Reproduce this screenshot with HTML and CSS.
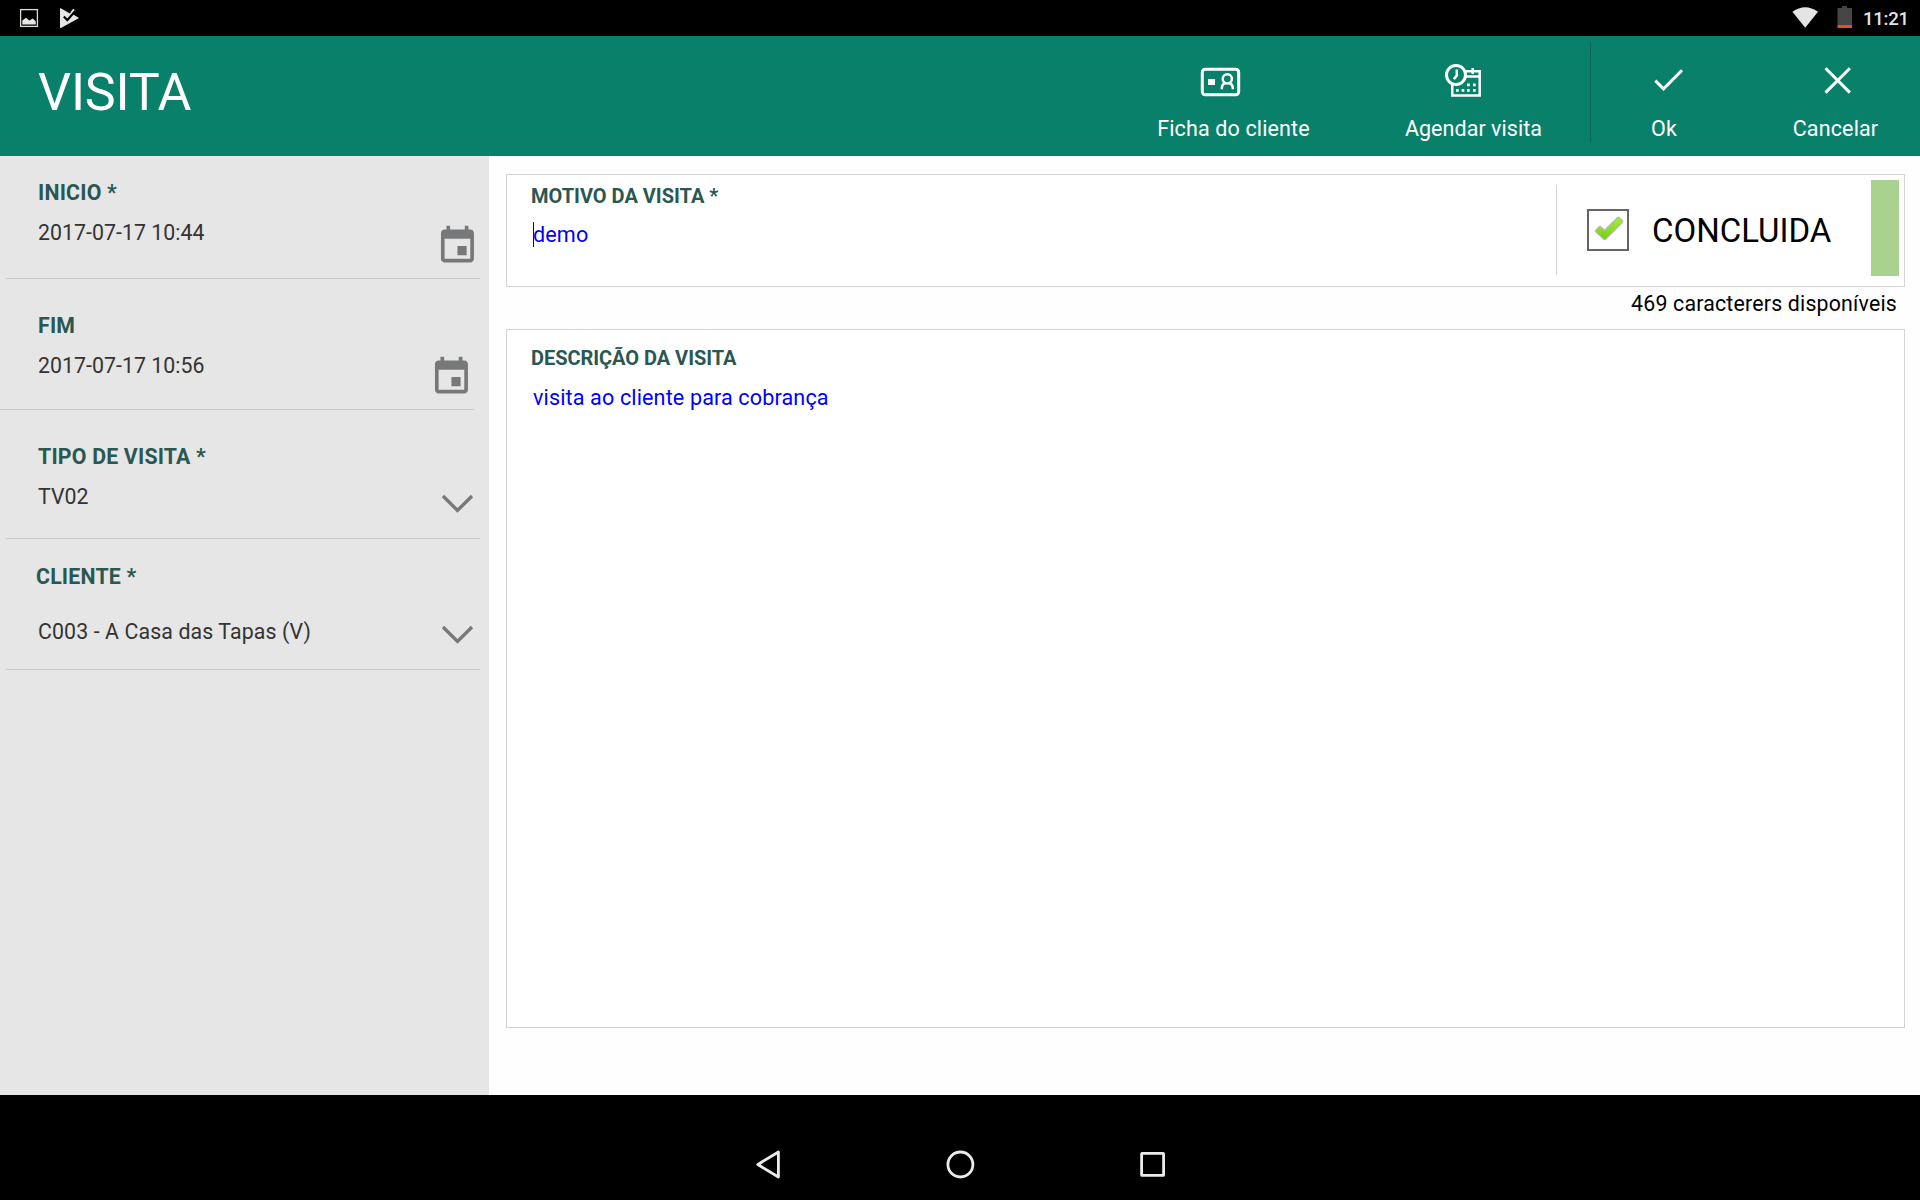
FILE: index.html
```html
<!DOCTYPE html>
<html lang="pt">
<head>
<meta charset="utf-8">
<title>Visita</title>
<link rel="stylesheet" href="styles.css">
</head>
<body>
<div class="status">
  <svg class="status-left" width="64" height="36" viewBox="0 0 64 36">
    <rect x="0.6" y="9.6" width="16.8" height="16.8" fill="none" stroke="#deded9" stroke-width="1.3"/>
    <path d="M2.3 24.5V20.6l3.8-2.9 3.2 2.9 3.5-2 2.9 2.6v3.3z" fill="#e6e6e6"/>
    <path d="M40 8.6q0-.7.7-.3l8.8 4.9 3.7-4.4 2.5 1.9-3 3.6 5.6 3.1q.8.5 0 1l-17 9.4q-1.3.6-1.3-.6z" fill="#e6e6e6"/>
    <path d="M43.8 16.6l3.5 3.5L55.400 10.700" fill="none" stroke="#000" stroke-width="2.1"/>
    <path d="M49.500 13.200l1-1.200" stroke="#000" stroke-width="1"/>
  </svg>
  <div class="status-right">
    <svg width="60" height="36" viewBox="0 0 60 36">
      <path d="M.4 11.800Q13.200 2.600 26 11.800L13.200 27.700z" fill="#e4e4e4"/>
      <path d="M45.500 8h4.500V6h5v2h5v17H45.500z" fill="#454545"/>
      <path d="M45.500 25H60v3H45.500z" fill="#e2521f"/>
    </svg>
    <span class="clock">11:21</span>
  </div>
</div>

<header class="header">
  <h1 class="title">VISITA</h1>
  <nav class="actions">
    <div class="action action-card">
      <svg class="action-icon" viewBox="0 0 96 48">
        <rect x="16.300" y="13.300" width="36.400" height="25.400" rx="3"/>
        <path class="solid" d="M22 23h7v6h-7z"/>
        <g class="fine"><circle cx="41.300" cy="22.800" r="4.600"/><path d="M35.700 33.200c0-3.600 1.500-5.600 4-6.100M46.900 33.200c0-3.600-1.500-5.600-4-6.100"/></g>
      </svg>
      <span>Ficha do cliente</span>
    </div>
    <div class="action action-schedule">
      <svg class="action-icon" viewBox="0 0 96 48">
        <circle cx="32" cy="19" r="9.500"/>
        <path class="fine" d="M32.800 13.500v6l-3 3.600"/>
        <path class="fine" d="M41.500 15.200h14.200v24.400H28.300V28.500M42 20.500h13.500M48.700 12v6"/>
        <path class="solid" d="M43 27.500h2.700v2.700H43zM49 27.500h2.700v2.700H49zM32 33h2.700v2.700H32zM37.600 33h2.700v2.700h-2.700zM43 33h2.700v2.700H43zM49 33h2.700v2.700H49z"/>
      </svg>
      <span>Agendar visita</span>
    </div>
    <div class="rule"></div>
    <div class="action action-ok">
      <svg class="action-icon" viewBox="0 0 96 48"><path d="M39.300 24.600l8.200 8.200L66 14.300"/></svg>
      <span>Ok</span>
    </div>
    <div class="action action-cancel">
      <svg class="action-icon" viewBox="0 0 96 48"><path d="M37.500 12.200l24.400 24.400M61.900 12.200L37.500 36.600"/></svg>
      <span>Cancelar</span>
    </div>
  </nav>
</header>

<div class="body">
  <aside class="sidebar">
    <div class="field field-start">
      <div class="field-text"><div class="label">INICIO *</div><div class="value">2017-07-17 10:44</div></div>
      <svg class="field-icon" viewBox="0.3 0 24 24"><path class="calendar" d="M17 12h-5v5h5v-5zM16 1v2H8V1H6v2H5c-1.110 0-1.990.9-1.990 2L3 19c0 1.100.89 2 2 2h14c1.100 0 2-.9 2-2V5c0-1.100-.9-2-2-2h-1V1h-2zm3 18H5V8h14v11z"/></svg>
    </div>
    <div class="field field-end">
      <div class="field-text"><div class="label">FIM</div><div class="value">2017-07-17 10:56</div></div>
      <svg class="field-icon" viewBox="0.3 0 24 24"><path class="calendar" d="M17 12h-5v5h5v-5zM16 1v2H8V1H6v2H5c-1.110 0-1.990.9-1.990 2L3 19c0 1.100.89 2 2 2h14c1.100 0 2-.9 2-2V5c0-1.100-.9-2-2-2h-1V1h-2zm3 18H5V8h14v11z"/></svg>
    </div>
    <div class="field field-type">
      <div class="field-text"><div class="label">TIPO DE VISITA *</div><div class="value">TV02</div></div>
      <svg class="field-icon" viewBox="0 0 44 44"><path class="chevron" d="M7 12l14.500 14.500L36 12"/></svg>
    </div>
    <div class="field field-client">
      <div class="field-text"><div class="label">CLIENTE *</div><div class="value">C003 - A Casa das Tapas (V)</div></div>
      <svg class="field-icon" viewBox="0 0 44 44"><path class="chevron" d="M7 12l14.500 14.500L36 12"/></svg>
    </div>
  </aside>

  <main class="main">
    <section class="card reason">
      <div class="reason-text">
        <div class="label card-label">MOTIVO DA VISITA *</div>
        <div class="entry"><span class="caret"></span>demo</div>
      </div>
      <div class="done">
        <svg class="checkbox" width="42" height="42" viewBox="0 0 42 42">
          <defs><linearGradient id="tick" x1="0" y1="0" x2="0" y2="1"><stop offset="0" stop-color="#a4ee34"/><stop offset="1" stop-color="#78cd16"/></linearGradient></defs>
          <rect x="1" y="1" width="40" height="40" fill="#fff" stroke="#666" stroke-width="2"/>
          <path d="M8.700 21.300l3.300-3.500q1-.8 2 .1l3.500 3.400L30.500 8.500q1-.8 2 .1l3 3q.7 1-.1 1.900L19 30q-1.300 1-2.600 0l-7.700-7.200q-.8-.8 0-1.500z" fill="url(#tick)" stroke="#b9bcb6" stroke-width="1.200"/>
        </svg>
        <span class="done-text">CONCLUIDA</span>
      </div>
      <div class="state"></div>
    </section>
    <div class="counter">469 caracterers disponíveis</div>
    <section class="card description">
      <div class="label card-label">DESCRIÇÃO DA VISITA</div>
      <div class="entry">visita ao cliente para cobrança</div>
    </section>
  </main>
</div>

<footer class="navbar">
  <svg width="30" height="34" viewBox="0 0 30 34"><path d="M4.800 17.500L25.400 5v25z"/></svg>
  <svg width="30" height="34" viewBox="0 0 30 34"><circle cx="15.400" cy="17.500" r="12.500"/></svg>
  <svg width="30" height="34" viewBox="0 0 30 34"><rect x="4.600" y="6.400" width="22" height="22" rx="0.500"/></svg>
</footer>
</body>
</html>
```
FILE: styles.css
```css
* { box-sizing: border-box; }

body {
  margin: 0;
  width: 1920px;
  height: 1200px;
  display: flex;
  flex-direction: column;
  overflow: hidden;
  background: #fefefe;
  font-family: Roboto, "Liberation Sans", sans-serif;
  font-size: 21.3px;
  line-height: 26px;
}

svg { display: block; flex: none; }

/* System status bar */
.status {
  height: 36px;
  display: flex;
  justify-content: space-between;
  padding: 0 13px 0 20px;
  background: #000;
}
.status-right { display: flex; gap: 11px; }
.clock {
  width: 44px;
  font-size: 18.6px;
  font-weight: 500;
  line-height: 38px;
  letter-spacing: -0.3px;
  color: #e4e4e4;
}

/* App header */
.header {
  height: 120px;
  display: flex;
  justify-content: space-between;
  background: #098069;
  color: #fff;
}
.title {
  margin: 0;
  padding: 27px 0 0 38px;
  font-size: 52px;
  font-weight: 400;
  line-height: 60px;
  letter-spacing: -0.2px;
}
.actions { display: flex; }
.action {
  display: flex;
  flex-direction: column;
  align-items: center;
  gap: 12px;
  padding-top: 20px;
  font-size: 21.5px;
  letter-spacing: 0.14px;
}
.action-card { width: 240px; }
.action-card span { margin-right: 1px; }
.action-schedule { width: 236px; }
.action-schedule span { margin-left: 3px; letter-spacing: 0.05px; }
.action-ok { width: 146px; }
.action-cancel { width: 169px; margin-left: 14px; }
.rule { width: 1px; height: 101px; margin-top: 6px; background: #0b6557; }
.action-icon {
  width: 96px;
  height: 48px;
  fill: none;
  stroke: #fff;
  stroke-width: 3;
}
.action-icon .fine { stroke-width: 2.5; }
.action-icon .solid { fill: #fff; stroke: none; }

.body { height: 939px; display: flex; }

/* Visit fields */
.sidebar { width: 489px; background: #e6e6e6; }
.field {
  width: 474px;
  margin-left: 6px;
  padding-left: 32px;
  display: flex;
  justify-content: space-between;
  align-items: flex-end;
  border-bottom: 1px solid #c9c9c9;
}
.field-text {
  align-self: flex-start;
  display: flex;
  flex-direction: column;
  gap: 14px;
}
.field-start { height: 123px; padding-top: 24px; }
.field-end { height: 131px; margin-left: 0; padding-left: 38px; padding-top: 34px; }
.field-type { height: 129px; padding-top: 34px; }
.field-client { height: 131px; padding-top: 25px; }
.field-client .field-text { gap: 29px; }
.field-client .label { margin-left: -2px; }
.label { font-weight: 700; letter-spacing: 0.2px; color: #2a5752; }
.value { letter-spacing: 0.04px; color: #333; }
.field-client .value { letter-spacing: 0.12px; }
.field-icon { width: 44px; height: 44px; margin-bottom: 10px; }
.calendar { fill: #777879; }
.chevron { fill: none; stroke: #777879; stroke-width: 3.3; }

/* Visit details */
.main { flex: 1; padding: 18px 15px 0 17px; }
.card { border: 1px solid #d3d3d3; background: #fff; }
.card-label { font-size: 20px; letter-spacing: 0; }
.entry {
  display: flex;
  margin: 13px 0 0 2px;
  font-size: 21.6px;
  letter-spacing: 0.12px;
  color: #00f;
}
.caret { width: 1px; height: 25px; margin-right: -1px; background: #00c; }
.reason { height: 113px; display: flex; }
.reason-text { flex: 1; padding: 8px 0 0 24px; }
.done {
  width: 315px;
  height: 90px;
  margin-top: 10px;
  padding: 24px 0 0 30px;
  display: flex;
  gap: 23px;
  border-left: 1px solid #d3d3d3;
}
.done-text { font-size: 33px; line-height: 44px; color: #000; }
.state { width: 28px; height: 96px; margin: 5px 5px 0 0; background: #a8d28d; }
.counter {
  height: 42px;
  padding: 4px 8px 0 0;
  text-align: right;
  letter-spacing: 0.2px;
  color: #000;
}
.description { height: 699px; padding: 15px 0 0 24px; }
.description .card-label { letter-spacing: -0.04px; }
.description .entry { margin-top: 14px; }

/* System navigation bar */
.navbar {
  flex: 1;
  display: flex;
  justify-content: center;
  gap: 162px;
  padding-top: 52px;
  background: #000;
}
.navbar svg { fill: none; stroke: #ebebeb; stroke-width: 2.8; stroke-linejoin: round; }
```
